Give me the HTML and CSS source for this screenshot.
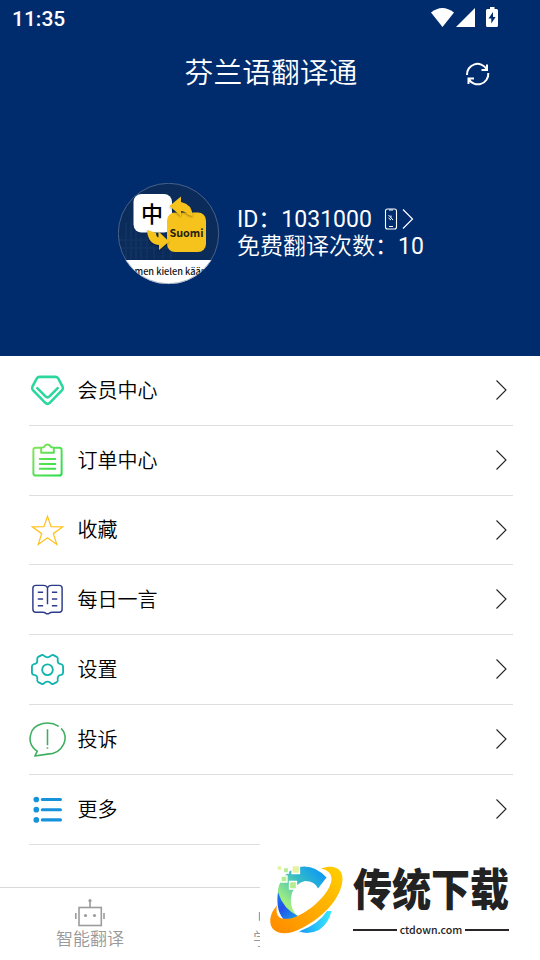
FILE: index.html
```html
<!DOCTYPE html>
<html lang="zh-CN">
<head>
<meta charset="utf-8">
<title>芬兰语翻译通</title>
<link rel="stylesheet" href="styles.css">
</head>
<body>
<div class="app">
  <header class="hero">
    <div class="status"><span class="clock">11:35</span>
      <svg class="status-icons" width="72" height="24" viewBox="430 6 72 24" fill="#fff"><path d="M431 12.500Q442.300 3.500 454 12.500L442.500 27Z"/><path d="M456 27L475 8V27Z"/><path fill-rule="evenodd" d="M487.500 9H490V7H494.500V9H496.500Q498 9 498 10.500V25.500Q498 27 496.500 27H487.500Q486 27 486 25.500V10.500Q486 9 487.500 9ZM493 12L488.500 18.500H491.300V23.500L495.600 17H493Z"/></svg>
    </div>
    <div class="titlebar"><h1>芬兰语翻译通</h1>
      <svg class="refresh" width="26" height="26" viewBox="465 61 26 26" fill="none" stroke="#fff" stroke-width="2"><path d="M467 75A10.500 10.500 0 0 1 486.500 69M487 64.500V70H481.500M488.300 73A10.500 10.500 0 0 1 468.700 79M468.500 84V78.500H474"/></svg>
    </div>
    <div class="profile">
      <svg class="avatar" width="102" height="102" viewBox="0 0 102 102">
        <defs><clipPath id="disc"><circle cx="50.500" cy="50.500" r="50.500"/></clipPath><filter id="shade" x="-30%" y="-30%" width="160%" height="160%"><feDropShadow dx="0" dy="1" stdDeviation="1.200" flood-opacity=".45"/></filter></defs>
        <g clip-path="url(#disc)"><path fill="#0b2b5a" d="M0 0H102V102H0Z"/><path d="M8 40V76M13 37V76M18 43V76M23 54V76M29 51V76M36 62V76M45 68V76M53 67V76M0 57H31M0 65H61" stroke="#123766" stroke-opacity=".6" stroke-width="2"/><path fill="#fff" d="M0 77H102V102H0Z"/>
        <rect x="15.500" y="11" width="38.500" height="38.500" rx="8" fill="#fff"/>
        <rect x="49" y="29.500" width="39" height="39.500" rx="8" fill="#f6c31c"/>
        <g fill="#f6c31c" filter="url(#shade)"><path d="M51.500 23L63 13.500V19Q74 21 74.500 33L70 31.500Q67 28 63 28V33Z"/><path d="M29 47L38 50Q38 54 40.500 54.500V48.500L51 58.500L41 67V62Q30 61 29 47Z"/></g>
        <text class="avatar-cn" x="34" y="38.500" text-anchor="middle">中</text><text class="avatar-fi" x="68.500" y="54" text-anchor="middle">Suomi</text><text class="avatar-caption" x="16.500" y="92" textLength="72" lengthAdjust="spacingAndGlyphs">men kielen kään</text></g>
        <circle cx="50.500" cy="50.500" r="50.200" fill="none" stroke="#7187a8" stroke-width=".6"/>
      </svg>
      <div class="account"><div class="id-line"><span>ID：1031000</span><svg width="30" height="24" viewBox="384 206 30 24" fill="none" stroke="#fff"><rect x="385.500" y="208" width="11" height="20" rx="2" stroke-width="1.100"/><path d="M389 225.500H393M389 209H393M388.500 214L393 219M388.500 217L391 219M391 214.500V216.500" stroke-width="1"/><path d="M403 208.500L412.500 218L403 227.500" stroke-width="1.200"/></svg></div><div class="quota">免费翻译次数：<span>10</span></div></div>
    </div>
  </header>
  <main class="menu">
    <div class="row"><svg class="icon" viewBox="0 0 38 38" fill="none" stroke="#2bd79e" stroke-width="2.600" stroke-linecap="round" stroke-linejoin="round"><path d="M11 5H27Q29 5 30 6.500L34.500 15Q35.300 17 34 18.500L21.500 31.500Q19 34 16.500 31.500L4 18.500Q2.700 17 3.500 15L8 6.500Q9 5 11 5ZM8.500 16.500L17 25Q19 27 21 25L29.500 16.500"/></svg><span>会员中心</span><svg class="chevron" viewBox="0 0 14 22"><path d="M1.500 1.500L11 11L1.500 20.500"/></svg></div>
    <div class="row"><svg class="icon" viewBox="0 0 38 38" fill="none" stroke="url(#green)" stroke-width="2" stroke-linejoin="round" stroke-linecap="round"><defs><linearGradient id="green" x2="1" y2="1"><stop stop-color="#88e45b"/><stop offset="1" stop-color="#22dd48"/></linearGradient></defs><path d="M13 6H7Q4.500 6 4.500 8V32Q4.500 34.500 7 34.500H31Q33.500 34.500 33.500 32V8Q33.500 6 31 6H25M12.500 11V6.500Q12.500 5.500 14 5.500H15Q17 2.500 19 2.500Q21 2.500 23 5.500H24Q25.500 5.500 25.500 6.500V11ZM11 17.500H27M11 22.500H27M11 27.500H27"/></svg><span>订单中心</span><svg class="chevron" viewBox="0 0 14 22"><path d="M1.500 1.500L11 11L1.500 20.500"/></svg></div>
    <div class="row"><svg class="icon" viewBox="0 0 38 38" fill="none" stroke="#ffc11c" stroke-width="1.300"><path d="M19 4.500L22.700 15L34.500 15.300L25 22.200L28.500 33.300L19 26.500L9.500 33.300L13 22.200L3.500 15.300L15.300 15Z"/></svg><span>收藏</span><svg class="chevron" viewBox="0 0 14 22"><path d="M1.500 1.500L11 11L1.500 20.500"/></svg></div>
    <div class="row"><svg class="icon" viewBox="0 0 38 38" fill="none" stroke="#2d3b8b" stroke-width="1.500"><path d="M19 24V7Q18 4.500 15 4.500H7Q4 4.500 4 7.500V29Q4 32 7 32H14Q16 32 17 33Q19 34.500 21 33Q22 32 24 32H31Q34 32 34 29V7.500Q34 4.500 31 4.500H23Q20 4.500 19 7M9 11.500H14.500M9 18.500H14.500M9 25.500H14.500M23.500 11.500H29M23.500 18.500H29M23.500 25.500H29"/></svg><span>每日一言</span><svg class="chevron" viewBox="0 0 14 22"><path d="M1.500 1.500L11 11L1.500 20.500"/></svg></div>
    <div class="row"><svg class="icon" viewBox="0 0 38 38" fill="none" stroke="#12b5ad" stroke-width="1.900" stroke-linejoin="round"><path d="M13.500 4Q15 4 16 5.500Q19 7.500 22 5.500Q23 4 24.500 4L28.500 6Q30 7 29.500 9Q29 13 33 13.500Q35 14 35 16V22Q35 24 33 24.500Q29 25 29.500 29Q30 31 28.500 32L24.500 34Q23 34 22 32.500Q19 30.500 16 32.500Q15 34 13.500 34L9.500 32Q8 31 8.500 29Q9 25 5 24.500Q3 24 3 22V16Q3 14 5 13.500Q9 13 8.500 9Q8 7 9.500 6Z"/><circle cx="19" cy="19.200" r="5.500"/></svg><span>设置</span><svg class="chevron" viewBox="0 0 14 22"><path d="M1.500 1.500L11 11L1.500 20.500"/></svg></div>
    <div class="row"><svg class="icon" viewBox="0 0 38 38" fill="none" stroke="#3dae60" stroke-width="1.600" stroke-linejoin="round"><path d="M33 7.500C37 11 38.500 18 35.500 24C32 31 26 34 19 34L6 36L8.500 31C2 27 -.5 20 2 13C5 2.500 20 -1 30.500 5.500M19 8.500V25M19 27V28.500"/></svg><span>投诉</span><svg class="chevron" viewBox="0 0 14 22"><path d="M1.500 1.500L11 11L1.500 20.500"/></svg></div>
    <div class="row"><svg class="icon" viewBox="0 0 38 38" fill="#1692dc"><circle cx="7.500" cy="8.700" r="2.900"/><circle cx="7.500" cy="19.200" r="2.900"/><circle cx="7.500" cy="29.700" r="2.900"/><path d="M13.700 8.700H32.300M13.700 19.200H32.300M13.700 29.700H32.300" stroke="#1692dc" stroke-width="3.200" stroke-linecap="round"/></svg><span>更多</span><svg class="chevron" viewBox="0 0 14 22"><path d="M1.500 1.500L11 11L1.500 20.500"/></svg></div>
  </main>
  <nav class="tabs">
    <div class="tab"><svg width="32" height="30" viewBox="74 898 32 30" fill="none" stroke="#9c9c9c" stroke-width="1.600"><rect x="79" y="907.500" width="22.300" height="18"/><path d="M90 907V901M75.800 913V919M104 913V919"/><g fill="#9c9c9c" stroke="none"><circle cx="90" cy="900.700" r="1.600"/><circle cx="85.500" cy="915.500" r="1.600"/><circle cx="94.500" cy="915.500" r="1.600"/></g></svg><span>智能翻译</span></div>
    <div class="tab"><svg width="32" height="30" viewBox="0 0 32 30" fill="none" stroke="#9c9c9c" stroke-width="1.500"><path d="M5.600 14V22H26V14"/></svg><span>学习</span></div>
  </nav>
  <aside class="watermark">
    <svg class="swirl" width="78" height="76" viewBox="268 862 78 76">
      <defs><linearGradient id="gold" x1="0" y1="1" x2="1" y2="0"><stop stop-color="#ff8900"/><stop offset="1" stop-color="#ffd000"/></linearGradient><linearGradient id="aqua" gradientUnits="userSpaceOnUse" x1="288" y1="905" x2="325" y2="870"><stop stop-color="#a1ee7e"/><stop offset=".5" stop-color="#35bbc6"/><stop offset="1" stop-color="#0794fb"/></linearGradient><linearGradient id="blue" x2=".6" y2="1"><stop stop-color="#1685ef"/><stop offset=".5" stop-color="#2450e9"/><stop offset="1" stop-color="#1994e9"/></linearGradient><linearGradient id="sky" x2="1"><stop stop-color="#1598f4"/><stop offset="1" stop-color="#3be8ff"/></linearGradient></defs>
      <path fill="url(#aqua)" d="M326.500 877.500Q314 864 299 867Q282 872 278 889Q276 908 286 922L298 917Q288 907 292 893Q296 883 305 881Q315 881 318 888.500Z"/>
      <path fill="url(#blue)" d="M278 892Q283 909 298 916L286 922Q275 912 278 892Z"/>
      <path fill="url(#sky)" d="M299 931.500Q319 924 327 911H331.500Q329 923 319 930Q309 935 299 931.500Z"/>
      <path fill="url(#gold)" d="M321 868.500C335 864 343 869 342.500 880C341 899 322 918 302 928C286 937 271 934 270.300 922C270 915 273 910 277 905.500C275 917 280 920 290 918.500C307 915 330 894 331.500 880C332 874 328 870 321 868.500Z"/>
      <g stroke="#fff" stroke-width="1.300"><path fill="#e5f3a0" d="M277 865.500H282V870.500H277ZM292 865.500H299.500V873.500H292Z"/><path fill="#b4ed8f" d="M283.500 867.500H288.500V873H283.500ZM281 876H287V882H281ZM289.500 881.500H296.500V889H289.500Z"/></g>
    </svg>
    <div class="brand"><svg class="brand-name" width="158" height="52" viewBox="0 0 158 52"><text transform="scale(1 1.120)" x="0" y="39.500" textLength="156" lengthAdjust="spacingAndGlyphs">传统下载</text></svg><div class="domain"><i></i><span>ctdown.com</span><i></i></div></div>
  </aside>
</div>
</body>
</html>
```
FILE: styles.css
```css
* { box-sizing: border-box; }
body { margin: 0; background: #fff; color: #000; font-family: Roboto, "Noto Sans CJK SC", sans-serif; }
svg { display: block; flex: none; }
.app { position: relative; width: 540px; height: 960px; overflow: hidden; display: flex; flex-direction: column; }
.hero { height: 356px; flex: none; background: #002c6d; color: #fff; }
.status { height: 36px; padding: 0 38px 0 12px; display: flex; align-items: center; justify-content: space-between; }
.clock { font-size: 21px; line-height: 36px; font-weight: 500; padding-top: 2px; }
.titlebar { height: 76px; display: grid; grid-template-columns: 1fr auto 1fr; align-items: center; padding-left: 2px; }
h1 { grid-column: 2; margin: -2px 0 0; font-size: 28.8px; line-height: 42px; font-weight: 350; }
.refresh { grid-column: 3; margin-left: 108px; }
.profile { height: 102px; margin: 71px 0 0 118px; display: flex; align-items: center; }
.account { margin-left: 17px; font-size: 23px; line-height: 27px; padding-bottom: 2px; white-space: nowrap; }
.quota { font-weight: 350; }
.quota span { font-weight: 400; }
.id-line { height: 27px; display: flex; align-items: center; }
.id-line svg { margin-left: 12px; margin-top: -2px; }
.avatar-cn { font: 500 22px "Noto Sans CJK SC", sans-serif; }
.avatar-fi { font: 700 10.8px "Noto Sans CJK SC", sans-serif; fill: #26220f; }
.avatar-caption { font: 500 9.400px "Noto Sans CJK SC", sans-serif; fill: #111; }
.menu { flex: none; height: 489px; padding: 0 27px 0 29px; display: grid; grid-template-rows: 70px 70px 69px 70px 70px 70px 70px; }
.row { display: flex; align-items: center; border-bottom: 1px solid #dedede; font-size: 20px; font-weight: 350; line-height: 30px; padding-right: 4px; }
.icon { width: 37px; height: 37px; margin-right: 11.500px; }
.row span { flex: 1; }
.chevron { width: 14px; height: 22px; margin-top: -1px; fill: none; stroke: #222; stroke-width: 1.1; }
.tabs { margin-top: 42px; height: 73px; border-top: 1px solid #d9d9d9; display: grid; grid-template-columns: repeat(3, 180px); color: #999; font-size: 17px; font-weight: 350; }
.tab { display: flex; flex-direction: column; align-items: center; padding-top: 10px; }
.tab span { line-height: 22px; }
.watermark { position: absolute; right: 0; bottom: 0; width: 280px; height: 118px; background: #fff; display: flex; padding: 20px 0 0 8px; }
.brand { margin-left: 7px; width: 158px; }
.brand-name text { font: 900 40px "Noto Sans CJK SC", sans-serif; fill: #222; }
.domain { display: flex; align-items: center; gap: 3px; width: 156px; height: 16px; margin-top: 8px; font: 500 10.600px/16px "Noto Sans CJK SC", sans-serif; color: #222; }
.domain i { height: 2px; flex: 1; background: #2a2526; }
```
